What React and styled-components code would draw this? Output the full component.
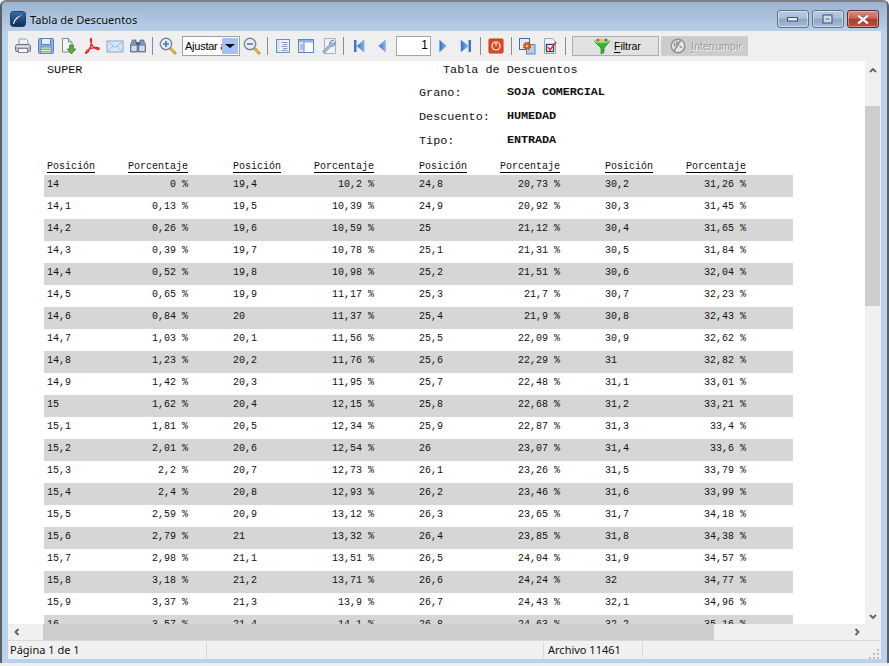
import React from "react";
import styled, { createGlobalStyle } from "styled-components";

const Global = createGlobalStyle`
  html, body { margin: 0; padding: 0; background: #f0f0f0; }
  * { box-sizing: border-box; }
`;

const UI = `"Noto Sans", "Open Sans", sans-serif`;
const TB = `"Liberation Sans", Arial, sans-serif`;
const MONO = `"Liberation Mono", monospace`;

const Win = styled.div`
  width: 889px; height: 663px; display: flex; flex-direction: column;
  border: solid #5a6068; border-width: 2px 2px 0 2px; border-top-color: #7c8086;
  border-radius: 6px 6px 0 0;
  background: linear-gradient(#9bb3cf 0, #b9d1ea 31px, #b9d1ea 100%);
  overflow: hidden;
`;
const TitleBar = styled.div`
  height: 29px; display: flex; align-items: flex-start; padding: 8px 8px 0 8px; flex: none;
`;
const AppIcon = styled.svg`width: 16px; height: 16px; margin-top: 1px; flex: none;`;
const TitleText = styled.div`
  font: 11.1px/19px ${UI}; color: #0c0c0c; margin-left: 4px; flex: 1;
  text-shadow: 0 0 4px rgba(255,255,255,.6);
`;
const WinBtns = styled.div`display: flex; gap: 3px;`;
const WinBtn = styled.div`
  width: 32px; height: 18px; border-radius: 3px; display: flex; align-items: center; justify-content: center;
  border: 1px solid ${p => (p.$close ? "#5c2a36" : "#5f7288")};
  box-shadow: inset 0 0 0 1px ${p => (p.$close ? "rgba(255,210,200,.5)" : "rgba(255,255,255,.45)")};
  background: ${p => (p.$close
    ? "linear-gradient(#d9897c 0, #c8685a 45%, #b1392a 50%, #bf4d3c 100%)"
    : "linear-gradient(#b6cbe2 0, #a9c0d9 45%, #8ba5c3 50%, #a6bdd8 100%)")};
`;
const Client = styled.div`
  flex: 1; min-height: 0; margin: 0 6px 4px 6px; display: flex; flex-direction: column; background: #f0f0f0;
`;
const Toolbar = styled.div`
  height: 30px; flex: none; display: flex; align-items: center; gap: 1px; padding-left: 4px; background: #efefef;
`;
const IconBtn = styled.div`
  width: 22px; height: 20px; display: flex; align-items: center; justify-content: center; flex: none;
`;
const Sep = styled.div`
  width: 1px; height: 18px; background: #8c8c8c; flex: none; margin: 0 3px 0 ${p => p.$l ?? 2}px;
`;
const Combo = styled.div`
  width: 58px; height: 20px; margin-left: 2px; display: flex; border: 1px solid #9f9f9f; background: #fff; padding: 1px; flex: none;
`;
const ComboText = styled.div`
  flex: 1; overflow: hidden; white-space: nowrap; font: 11px/16px ${TB}; letter-spacing: -.25px; color: #000; padding-left: 1px;
`;
const ComboArrow = styled.div`
  width: 16px; background: #a4c2f4; display: flex; align-items: center; justify-content: center;
  &::after { content: ""; border: solid transparent; border-width: 4px 5px 0 5px; border-top-color: #000; }
`;
const PageInput = styled.div`
  width: 35px; height: 20px; margin-left: 2px; border: 1px solid #a5a5a5; background: #fff; flex: none;
  font: 12px/17px ${TB}; text-align: right; color: #000; padding-right: 2px;
`;
const TextBtn = styled.div`
  width: 87px; height: 20px; flex: none; margin-left: ${p => p.$ml}px; display: flex; align-items: center; gap: 3px;
  padding-left: ${p => p.$pl}px; border: 1px solid ${p => (p.$disabled ? "#cfcfcf" : "#adadad")};
  background: ${p => (p.$disabled ? "#cccccc" : "#e1e1e1")};
  color: ${p => (p.$disabled ? "#9b9b9b" : "#000")};
  text-shadow: ${p => (p.$disabled ? "1px 1px 0 #f4f4f4" : "none")};
  font: 10.5px/18px ${TB};
  u { text-underline-offset: 2px; }
`;
const Middle = styled.div`flex: 1; min-height: 0; display: flex;`;
const Page = styled.div`
  flex: 1; min-width: 0; background: #fff; overflow: hidden; padding-left: 36px; color: #111;
`;
const Head = styled.div`
  width: 749px; padding-left: 3px; display: grid; grid-template-columns: 372px 88px 1fr;
  grid-template-rows: 20px 24px 24px 24px; font: 11.8px/16px ${MONO};
`;
const HeadLine = styled.div`white-space: pre; padding-left: ${p => p.$pl || 0}px; line-height: ${p => p.$lh || 25}px; grid-column: ${p => p.$col};`;
const HeadValue = styled(HeadLine)`font-weight: bold; letter-spacing: -.1px; line-height: 23px;`;
const Row = styled.div`
  width: 749px; height: 22px; padding-left: 3px; display: grid; grid-template-columns: repeat(4, 186px);
  background: ${p => (p.$alt ? "#d6d6d6" : "#fff")}; font: 10px/19px ${MONO};
`;
const HeaderRow = styled(Row)`padding-top: 6px; line-height: 15px;`;
const Group = styled.div`display: grid; grid-template-columns: 81px 60px 45px;`;
const Pct = styled.div`text-align: right; white-space: pre;`;
const ColHead = styled.div`
  height: 14px; border-bottom: 1px solid #000; white-space: nowrap;
  ${p => (p.$w ? `width: ${p.$w}px;` : "")}
`;
const VBar = styled.div`width: 16px; flex: none; display: flex; flex-direction: column; background: #f0f0f0;`;
const VArrow = styled.div`
  height: 17px; display: flex; align-items: center; justify-content: center; flex: none;
  ${p => (p.$end ? "margin-top: auto;" : "")}
`;
const VThumb = styled.div`width: 15px; height: 200px; margin-top: 28px; background: #cdcdcd; flex: none;`;
const HBar = styled.div`height: 16px; flex: none; display: flex; background: #f0f0f0; padding-right: 16px;`;
const HArrow = styled.div`
  width: 17px; display: flex; align-items: center; justify-content: center; flex: none;
  ${p => (p.$end ? "margin-left: auto;" : "")}
`;
const HThumb = styled.div`width: 671px; margin-left: 18px; background: #cdcdcd; flex: none;`;
const Status = styled.div`
  height: 19px; flex: none; display: flex; align-items: stretch; border-top: 1px solid #d9d9d9; background: #f0f0f0;
  padding: 1px 2px 1px 0; font: 11px/16px ${UI}; color: #111;
`;
const Cell = styled.div`
  width: ${p => p.$w}px; padding-left: ${p => p.$pl}px; border-right: 1px solid #d9d9d9; flex: none; white-space: nowrap;
`;
const Grip = styled.svg`width: 10px; height: 10px; margin-left: auto; margin-top: 7px; flex: none;`;

const raw = `14|0|19,4|10,2|24,8|20,73|30,2|31,26
14,1|0,13|19,5|10,39|24,9|20,92|30,3|31,45
14,2|0,26|19,6|10,59|25|21,12|30,4|31,65
14,3|0,39|19,7|10,78|25,1|21,31|30,5|31,84
14,4|0,52|19,8|10,98|25,2|21,51|30,6|32,04
14,5|0,65|19,9|11,17|25,3|21,7|30,7|32,23
14,6|0,84|20|11,37|25,4|21,9|30,8|32,43
14,7|1,03|20,1|11,56|25,5|22,09|30,9|32,62
14,8|1,23|20,2|11,76|25,6|22,29|31|32,82
14,9|1,42|20,3|11,95|25,7|22,48|31,1|33,01
15|1,62|20,4|12,15|25,8|22,68|31,2|33,21
15,1|1,81|20,5|12,34|25,9|22,87|31,3|33,4
15,2|2,01|20,6|12,54|26|23,07|31,4|33,6
15,3|2,2|20,7|12,73|26,1|23,26|31,5|33,79
15,4|2,4|20,8|12,93|26,2|23,46|31,6|33,99
15,5|2,59|20,9|13,12|26,3|23,65|31,7|34,18
15,6|2,79|21|13,32|26,4|23,85|31,8|34,38
15,7|2,98|21,1|13,51|26,5|24,04|31,9|34,57
15,8|3,18|21,2|13,71|26,6|24,24|32|34,77
15,9|3,37|21,3|13,9|26,7|24,43|32,1|34,96
16|3,57|21,4|14,1|26,8|24,63|32,2|35,16`;
const rows = raw.split("\n").map(l => l.split("|"));

const I = ({ children, w = 18, h = 18 }) => (
  <svg width={w} height={h} viewBox="0 0 18 18" fill="none">{children}</svg>
);

const Print = () => (
  <I>
    <path d="M5 2h7l2 2v4H5z" fill="#eef2f7" stroke="#8fa0b4" />
    <path d="M1.500 9.500q0-2 2-2h11q2 0 2 2v4q0 1-1 1h-13q-1 0-1-1z" fill="#b4bac1" stroke="#6b747e" />
    <rect x="4.500" y="11.500" width="9" height="4" fill="#fff" stroke="#7d8691" />
    <rect x="2.500" y="8.500" width="13" height="1.500" fill="#dfe3e8" />
  </I>
);
const Save = () => (
  <I>
    <rect x="1.500" y="1.500" width="15" height="15" rx="1" fill="#8fb2e4" stroke="#5a84c0" />
    <rect x="4.500" y="1.500" width="9" height="6" fill="#e6eef9" stroke="#5a84c0" />
    <rect x="4" y="10" width="10" height="6.500" fill="#eef5e6" stroke="#5a84c0" />
    <rect x="5" y="11.500" width="8" height="1.500" fill="#7cbf63" />
    <rect x="5" y="14" width="8" height="1.500" fill="#7cbf63" />
  </I>
);
const Export = () => (
  <I>
    <path d="M2.500 1.500h6l3.500 3.500v10h-9.500z" fill="#f1f4f8" stroke="#7d8996" />
    <path d="M8.500 1.500v3.500h3.500" fill="#cfd8e2" stroke="#7d8996" />
    <path d="M9.500 8h4v4H16l-4.500 5L7 12h2.500z" fill="#5aa544" stroke="#3b7a2d" strokeWidth=".7" />
  </I>
);
const Pdf = () => (
  <I>
    <path
      d="M7.800 1.500c-1 1.400 .2 5.200 2.200 7.800 1.600 2 4 3.500 5.600 3.100 1.300-.4 .6-1.900-2.300-1.900-3 0-6.800 1-9.100 3-1.800 1.600-1.900 3.200-.7 2.700 1.700-.7 3.600-5 4.600-9 .5-2.200 .6-5.800-.3-5.700z"
      stroke="#e0262b" strokeWidth="1.300"
    />
  </I>
);
const Mail = () => (
  <I>
    <rect x="1" y="4" width="16" height="11" fill="#d6e5f8" stroke="#86a8d4" />
    <path d="M1 4l8 6.500L17 4M1 15l6-6M17 15l-6-6" stroke="#9dbbe0" />
  </I>
);
const Binoc = () => (
  <I>
    <path d="M3.500 3h3.500v4h1.500v8h-7V8z" fill="#8398b6" stroke="#4f668a" strokeWidth=".8" />
    <path d="M14.500 3H11v4H9.500v8h7V8z" fill="#8398b6" stroke="#4f668a" strokeWidth=".8" />
    <rect x="2.500" y="9" width="5" height="5" fill="#d3deec" />
    <rect x="10.500" y="9" width="5" height="5" fill="#d3deec" />
    <rect x="7" y="5" width="4" height="3" fill="#4f668a" />
  </I>
);
const Zoom = ({ plus }) => (
  <I>
    <path d="M11 11l5 5" stroke="#c69a2c" strokeWidth="3" strokeLinecap="round" />
    <path d="M11.500 11.500l4 4" stroke="#f4dc7a" strokeWidth="1" strokeLinecap="round" />
    <circle cx="7" cy="7" r="5.700" fill="#e6eef8" stroke="#7c8794" strokeWidth="1.400" />
    <path d={plus ? "M4 7h6M7 4v6" : "M4 7h6"} stroke="#4a74bd" strokeWidth="1.700" />
  </I>
);
const Book = () => (
  <I>
    <rect x="2.500" y="2.500" width="13" height="13" fill="#eef3fa" stroke="#6f8db8" />
    <rect x="3" y="3" width="2.500" height="12" fill="#d3e0f1" />
    <path d="M7.500 5.500h6M9 7.500h4.500M7.500 9.500h6M9 11.500h4.500M7.500 13.500h6" stroke="#7f9bc3" />
  </I>
);
const Panes = () => (
  <I>
    <rect x="1.500" y="2.500" width="15" height="13" fill="#fff" stroke="#5b85bd" />
    <rect x="2" y="3" width="14" height="2.500" fill="#8fb4e3" />
    <rect x="2" y="5.500" width="5" height="9.500" fill="#e1eaf6" />
    <path d="M7 5.500v10" stroke="#5b85bd" />
    <path d="M3 8h3M3 10h3M3 12h3" stroke="#8597ae" />
  </I>
);
const Tool = () => (
  <I>
    <path d="M4.500 1.500h11v15h-11z" fill="#eef2f8" stroke="#a3b3ca" />
    <path d="M14 3.500a3.500 3.500 0 0 0-4.500 4.300L2.500 14.500l1.800 1.800 6.700-7a3.500 3.500 0 0 0 4.300-4.500l-2.300 2-2-.5-.5-2z" fill="#a9bad0" stroke="#7790b5" strokeWidth=".8" />
  </I>
);
const Grad = ({ id }) => (
  <defs>
    <linearGradient id={id} x1="0" y1="0" x2="1" y2="0">
      <stop offset="0" stopColor="#2f6fc8" />
      <stop offset="1" stopColor="#8db4e6" />
    </linearGradient>
  </defs>
);
const First = () => (
  <I>
    <Grad id="n1" />
    <rect x="4" y="3" width="2.500" height="12" fill="#3a76cc" />
    <path d="M14 3v12L7 9z" fill="url(#n1)" stroke="#5a8ad0" strokeWidth=".5" />
  </I>
);
const Prev = () => (
  <I>
    <Grad id="n2" />
    <path d="M12.500 3v12L5.500 9z" fill="url(#n2)" stroke="#7ea8de" strokeWidth=".5" />
  </I>
);
const Next = () => (
  <I>
    <Grad id="n3" />
    <path d="M5.500 3v12l7-6z" fill="url(#n3)" stroke="#7ea8de" strokeWidth=".5" />
  </I>
);
const Last = () => (
  <I>
    <Grad id="n4" />
    <rect x="11.500" y="3" width="2.500" height="12" fill="#3a76cc" />
    <path d="M4 3v12l7-6z" fill="url(#n4)" stroke="#5a8ad0" strokeWidth=".5" />
  </I>
);
const Power = () => (
  <I>
    <rect x="2" y="2" width="14" height="14" rx="1" fill="#dd4a24" stroke="#c23c1a" />
    <circle cx="9" cy="9" r="4" stroke="#fff" strokeWidth="1.200" opacity=".9" />
    <path d="M9 5.500v3.500" stroke="#fff" strokeWidth="1.200" />
  </I>
);
const GearCopy = () => (
  <I>
    <rect x="1.500" y="1.500" width="10" height="11" fill="#e3ecf8" stroke="#3d6cab" />
    <rect x="8.500" y="7.500" width="8.500" height="9.500" fill="#b2cced" stroke="#5b87bf" />
    <circle cx="9" cy="9" r="3.200" fill="#e8630f" stroke="#c24a06" strokeWidth="2" strokeDasharray="1.500 1" />
    <circle cx="9" cy="9" r="1" fill="#fbe3c8" />
  </I>
);
const CheckDoc = () => (
  <I>
    <path d="M3.500 1.500h8l3 3v12h-11z" fill="#eef2f8" stroke="#97a5b8" />
    <rect x="5.500" y="7.500" width="7" height="7" fill="#fff" stroke="#1d3f86" strokeWidth="1.300" />
    <path d="M7 10l2 3 6-8" stroke="#e2332a" strokeWidth="1.600" />
  </I>
);
const Funnel = () => (
  <svg width="18" height="18" viewBox="0 0 18 18" fill="none">
    <path d="M1 4l7 7v6l3-1.500V11l6-7z" fill="#37b52e" stroke="#1e7d1c" strokeWidth=".7" />
    <ellipse cx="9" cy="4" rx="8" ry="2" fill="#9be36a" />
    <circle cx="5" cy="3" r="1.500" fill="#e6389d" />
    <circle cx="9" cy="2.500" r="1.500" fill="#f2d21e" />
    <circle cx="13" cy="3" r="1.500" fill="#7c4ad8" />
  </svg>
);
const Stop = () => (
  <svg width="16" height="16" viewBox="0 0 16 16" fill="none">
    <circle cx="8" cy="8" r="6.800" fill="#e8e8e8" stroke="#8f8f8f" strokeWidth="1.400" />
    <path d="M10.500 2.500L4 13M7 3v5M4.500 4.500v4M9.500 8l2.500 2" stroke="#8f8f8f" strokeWidth="1.500" />
  </svg>
);
const Chevron = ({ d }) => {
  const paths = { up: "M1 6l3-3 3 3", down: "M1 3l3 3 3-3", left: "M5.500 1l-3 3 3 3", right: "M2.500 1l3 3-3 3" };
  return (
    <svg width="8" height="8" viewBox="0 0 8 8" fill="none">
      <path d={paths[d]} stroke="#606060" strokeWidth="1.800" />
    </svg>
  );
};

export default function App() {
  return (
    <>
      <Global />
      <Win>
        <TitleBar>
          <AppIcon viewBox="0 0 16 16">
            <defs>
              <linearGradient id="ai" x1="0" y1="0" x2="0" y2="1">
                <stop offset="0" stopColor="#3a6fa8" />
                <stop offset="1" stopColor="#0d2b55" />
              </linearGradient>
            </defs>
            <rect x=".5" y=".5" width="15" height="15" rx="3" fill="url(#ai)" stroke="#1c3f6c" />
            <path d="M3 13c1-4 3-8 10-9-3 1-5 2-6 4 -1 .5-2 2-3 5z" fill="#fff" />
          </AppIcon>
          <TitleText>Tabla de Descuentos</TitleText>
          <WinBtns>
            <WinBtn>
              <svg width="12" height="6" viewBox="0 0 12 6"><rect x=".5" y="1.500" width="10" height="3.500" fill="#e6edf5" stroke="#3f4f63" /></svg>
            </WinBtn>
            <WinBtn>
              <svg width="12" height="10" viewBox="0 0 12 10" fill="none"><rect x="1" y="1" width="9" height="8" stroke="#3f4f63" strokeWidth="1" fill="#c9d8e8" /><rect x="3" y="3.500" width="5" height="3" fill="#8aa3bf" stroke="#e9f0f7" strokeWidth=".6" /></svg>
            </WinBtn>
            <WinBtn $close>
              <svg width="14" height="11" viewBox="0 0 14 11"><path d="M2 1.500l10 8M12 1.500l-10 8" stroke="#6a3d3a" strokeWidth="3.400" /><path d="M2 1.500l10 8M12 1.500l-10 8" stroke="#f4f4f4" strokeWidth="2.300" /></svg>
            </WinBtn>
          </WinBtns>
        </TitleBar>
        <Client>
          <Toolbar>
            <IconBtn><Print /></IconBtn>
            <IconBtn><Save /></IconBtn>
            <IconBtn><Export /></IconBtn>
            <IconBtn><Pdf /></IconBtn>
            <IconBtn><Mail /></IconBtn>
            <IconBtn><Binoc /></IconBtn>
            <Sep />
            <IconBtn><Zoom plus /></IconBtn>
            <Combo>
              <ComboText>Ajustar a la página</ComboText>
              <ComboArrow />
            </Combo>
            <IconBtn><Zoom /></IconBtn>
            <Sep $l={3} />
            <IconBtn><Book /></IconBtn>
            <IconBtn><Panes /></IconBtn>
            <IconBtn><Tool /></IconBtn>
            <Sep />
            <IconBtn><First /></IconBtn>
            <IconBtn><Prev /></IconBtn>
            <PageInput>1</PageInput>
            <IconBtn><Next /></IconBtn>
            <IconBtn><Last /></IconBtn>
            <Sep />
            <IconBtn><Power /></IconBtn>
            <Sep $l={3} />
            <IconBtn><GearCopy /></IconBtn>
            <IconBtn><CheckDoc /></IconBtn>
            <Sep $l={3} />
            <TextBtn $ml={2} $pl={20}><Funnel /><span><u>F</u>iltrar</span></TextBtn>
            <TextBtn $ml={1} $pl={8} $disabled><Stop /><span style={{ marginLeft: 2 }}><u>I</u>nterrumpir</span></TextBtn>
          </Toolbar>
          <Middle>
            <Page>
              <Head>
                <HeadLine $lh={18} $col="1">SUPER</HeadLine>
                <HeadLine $lh={18} $col="2 / 4" $pl={24}>Tabla de Descuentos</HeadLine>
                <HeadLine $col="2">Grano:</HeadLine>
                <HeadValue $col="3">SOJA COMERCIAL</HeadValue>
                <HeadLine $col="2">Descuento:</HeadLine>
                <HeadValue $col="3">HUMEDAD</HeadValue>
                <HeadLine $col="2">Tipo:</HeadLine>
                <HeadValue $col="3">ENTRADA</HeadValue>
              </Head>
              <HeaderRow>
                {[0, 1, 2, 3].map(g => (
                  <Group key={g}>
                    <ColHead $w={48}>Posición</ColHead>
                    <ColHead>Porcentaje</ColHead>
                  </Group>
                ))}
              </HeaderRow>
              {rows.map((r, i) => (
                <Row key={i} $alt={i % 2 === 0}>
                  {[0, 2, 4, 6].map(g => (
                    <Group key={g}>
                      <div>{r[g]}</div>
                      <Pct>{r[g + 1]} %</Pct>
                    </Group>
                  ))}
                </Row>
              ))}
            </Page>
            <VBar>
              <VArrow><Chevron d="up" /></VArrow>
              <VThumb />
              <VArrow $end><Chevron d="down" /></VArrow>
            </VBar>
          </Middle>
          <HBar>
            <HArrow><Chevron d="left" /></HArrow>
            <HThumb />
            <HArrow $end><Chevron d="right" /></HArrow>
          </HBar>
          <Status>
            <Cell $w={199} $pl={2}>Página 1 de 1</Cell>
            <Cell $w={337} $pl={0} />
            <Cell $w={99} $pl={4}>Archivo 11461</Cell>
            <Grip viewBox="0 0 10 10">
              <path d="M8 0h2v2H8zM4 4h2v2H4zM8 4h2v2H8zM0 8h2v2H0zM4 8h2v2H4zM8 8h2v2H8z" fill="#bdbdbd" />
            </Grip>
          </Status>
        </Client>
      </Win>
    </>
  );
}
